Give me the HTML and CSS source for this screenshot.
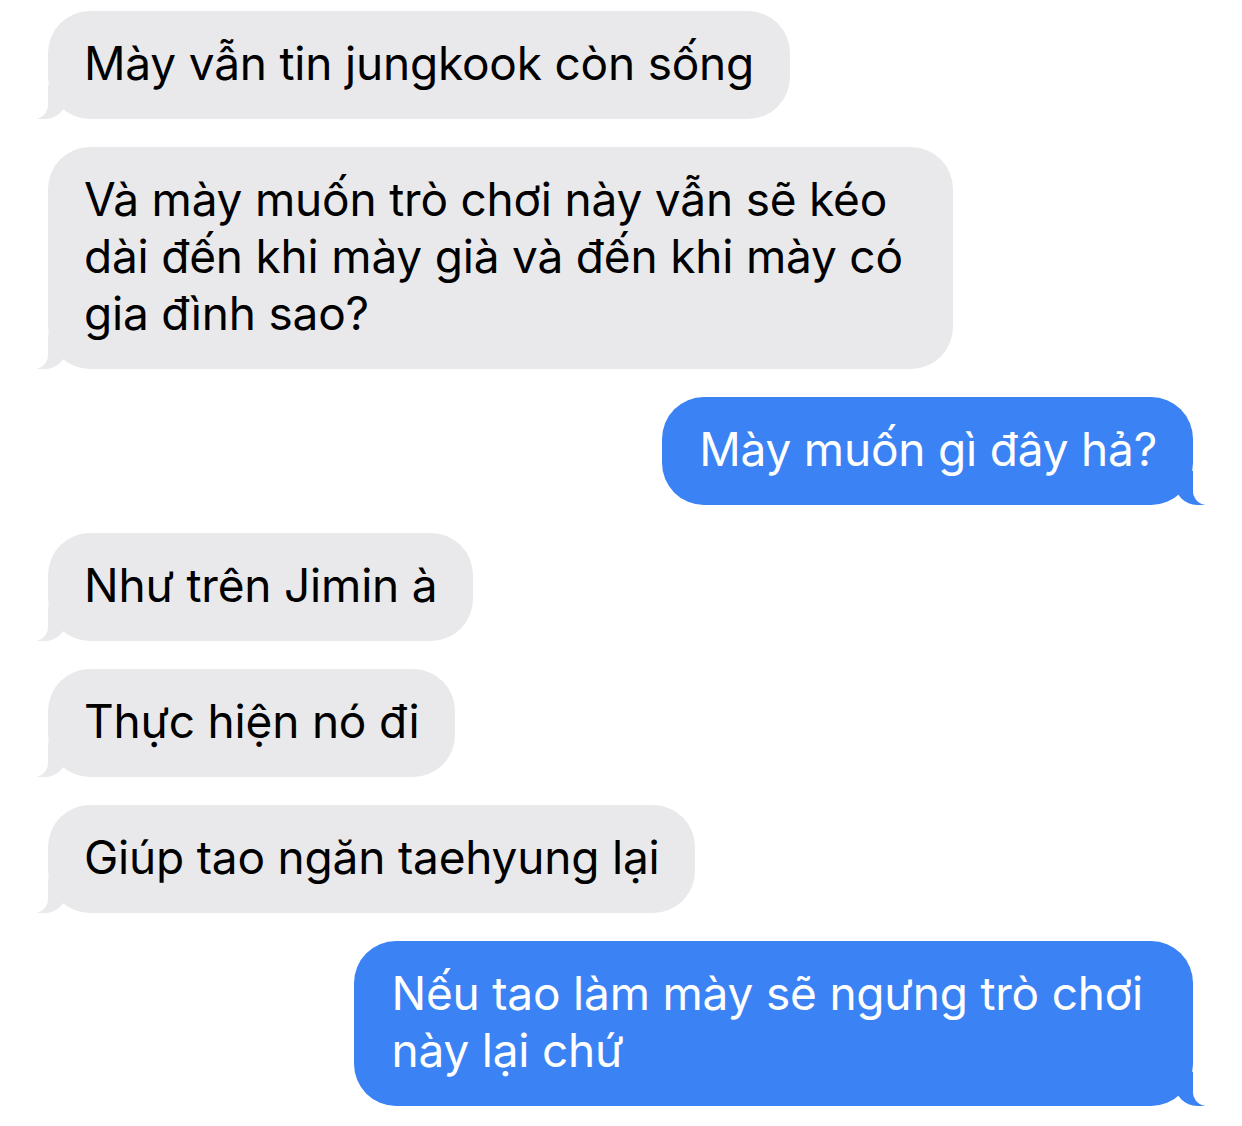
FILE: index.html
```html
<!DOCTYPE html>
<html lang="vi">
<head>
<meta charset="utf-8">
<link rel="stylesheet" href="styles.css">
</head>
<body>
<div class="chat">
  <div class="msg in">Mày vẫn tin jungkook còn sống</div>
  <div class="msg in multi">Và mày muốn trò chơi này vẫn sẽ kéo<br>dài đến khi mày già và đến khi mày có<br>gia đình sao?</div>
  <div class="msg out">Mày muốn gì đây hả?</div>
  <div class="msg in">Như trên Jimin à</div>
  <div class="msg in">Thực hiện nó đi</div>
  <div class="msg in">Giúp tao ngăn taehyung lại</div>
  <div class="msg out multi">Nếu tao làm mày sẽ ngưng trò chơi<br>này lại chứ</div>
</div>
</body>
</html>
```

FILE: styles.css
```css
html, body {
  margin: 0;
  padding: 0;
  background: #ffffff;
}
body {
  width: 1242px;
  height: 1126px;
  overflow: hidden;
  font-family: Inter, "Noto Sans", sans-serif;
}
.chat {
  display: flex;
  flex-direction: column;
  gap: 28px;
  padding: 11px 49px 0 48px;
}
.msg {
  position: relative;
  width: fit-content;
  font-size: 46px;
  line-height: 57px;
  padding: 23.5px 36px 27.5px;
  border-radius: 42px;
  letter-spacing: -0.2px;
}
.msg.multi {
  padding-right: 50px;
}
.in {
  align-self: flex-start;
  background: #e9e9eb;
  color: #000;
}
.out {
  align-self: flex-end;
  background: #3b82f5;
  color: #fff;
  padding-left: 37px;
}
.msg::before,
.msg::after {
  content: "";
  position: absolute;
  bottom: 0;
  height: 34px;
}
.in::before {
  left: -11px;
  width: 30px;
  background: #e9e9eb;
  border-bottom-right-radius: 22px;
}
.in::after {
  left: -30px;
  width: 30px;
  background: #fff;
  border-bottom-right-radius: 14px;
}
.out::before {
  right: -12px;
  width: 30px;
  background: #3b82f5;
  border-bottom-left-radius: 22px;
}
.out::after {
  right: -30px;
  width: 30px;
  background: #fff;
  border-bottom-left-radius: 14px;
}
```
